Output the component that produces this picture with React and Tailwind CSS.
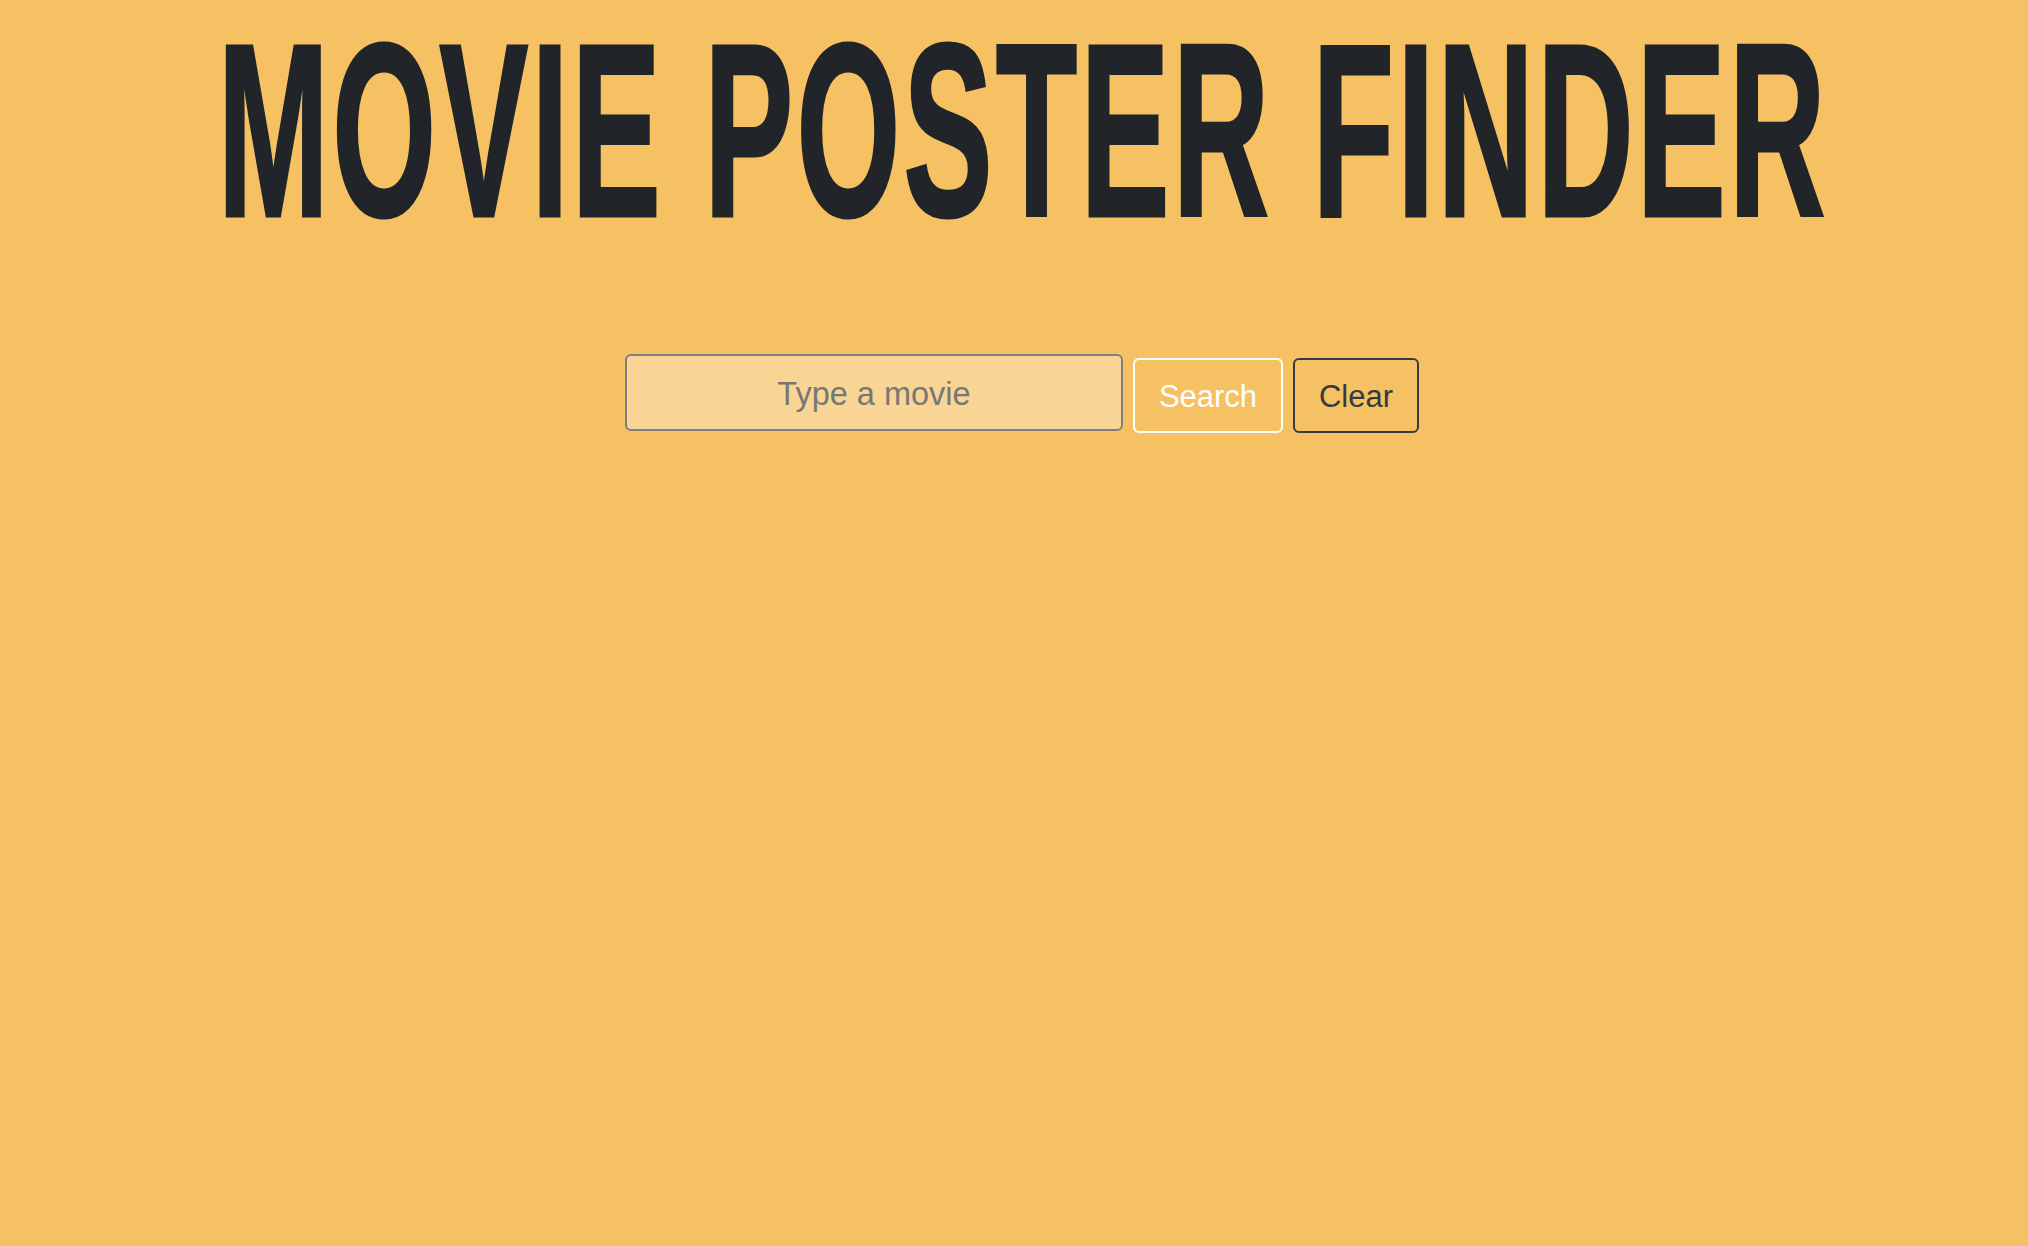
import React from "react";

export default function App() {
  return (
    <div className="min-h-[1246px] w-full overflow-hidden bg-[#f5c162]" style={{ fontFamily: '"Liberation Sans", Arial, sans-serif' }}>
      <div className="flex justify-center pt-[44px] pl-[18px]">
        <h1
          className="inline-block whitespace-nowrap py-[20px] text-[135px] leading-[135px] font-bold text-[#212529] scale-x-[0.988] scale-y-[1.822] origin-center tracking-[3.3px] [-webkit-text-stroke:1.7px_#212529]"
          style={{ fontFamily: '"Liberation Sans", Arial, sans-serif' }}
        >
          MOVIE POSTER FINDER
        </h1>
      </div>
      <div className="flex justify-center items-start gap-[10px] pt-[135px] pl-[16px]">
        <input
          type="text"
          placeholder="Type a movie"
          className="w-[498px] h-[77px] rounded-[6px] border-2 border-[#7f7f7f] bg-[#f8d594] pt-[4px] text-center text-[32.5px] text-[#212529] placeholder:text-[#777777] outline-none"
        />
        <button className="mt-[4px] w-[150px] h-[75px] rounded-[6px] border-2 border-white pt-[3px] text-white text-[31px]">
          Search
        </button>
        <button className="mt-[4px] w-[126px] h-[75px] rounded-[6px] border-2 border-[#343a40] pt-[3px] text-[#343a40] text-[31px]">
          Clear
        </button>
      </div>
    </div>
  );
}
